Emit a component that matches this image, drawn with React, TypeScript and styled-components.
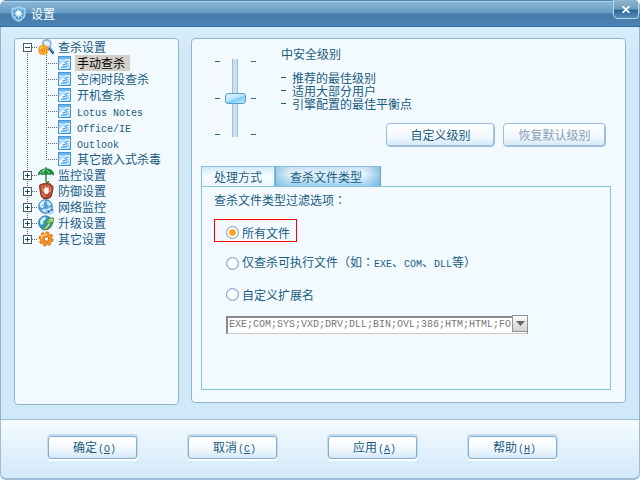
import React, { useState } from "react";
import styled, { createGlobalStyle, css } from "styled-components";

const ink = "#1a5c80";
const mono = '"Liberation Mono", monospace';

const GlobalStyle = createGlobalStyle`
  *, *::before, *::after { box-sizing: border-box; }
  body {
    margin: 0;
    background: #fff;
    color: ${ink};
    font: 12px/16px "Noto Sans CJK SC", sans-serif;
  }
  button, input, select { font: inherit; color: inherit; margin: 0; padding: 0; }
  ul, p { margin: 0; padding: 0; list-style: none; }
`;

const Window = styled.div`
  min-height: 100vh;
  display: flex;
  flex-direction: column;
  border-radius: 6px 6px 5px 5px;
  overflow: hidden;
  background: #d1e8f8;
`;

const TitleBar = styled.header`
  display: flex;
  align-items: flex-start;
  height: 27px;
  padding-left: 11px;
  border-bottom: 1px solid #2c6ea3;
  background: linear-gradient(#4d88b2 0 1px, #b1d3e8 1px 2px, #8ab7d6 2px, #649bc3 13px, #457ba9 14px, #4c83b2 26px);
`;

const Title = styled.h1`
  flex: 1;
  margin: 0;
  padding: 6px 0 0 5px;
  color: #fff;
  font-size: 12px;
  line-height: 16px;
  font-weight: 400;
`;

const ShieldBox = styled.span`
  display: flex;
  padding-top: 6px;
`;

const CloseButton = styled.button`
  display: grid;
  place-items: center;
  width: 26px;
  height: 19px;
  margin-right: 1px;
  border: 1px solid #b8d6e9;
  border-top: 0;
  border-radius: 0 0 4px 5px;
  background: linear-gradient(#8fb6d0, #6c9dbf 9px, #2d6693 10px, #5590b9);
`;

const Body = styled.main`
  flex: 1;
  display: grid;
  grid-template-columns: 165px minmax(0, 1fr);
  gap: 12px;
  padding: 11px 13px 14px 13px;
  border: solid #8fb3d0;
  border-width: 0 1px;
  background: linear-gradient(#d8edfb, #d1e8f8 30px);
`;

const Panel = styled.section`
  border: 1px solid #8fb4d0;
  border-radius: 4px;
  background: #f3faff;
`;

const SettingsPanel = styled(Panel)`
  margin-bottom: 2px;
  padding: 7px 14px 12px 9px;
  display: flex;
  flex-direction: column;
`;

const TreeList = styled.ul`
  position: relative;
  &::before {
    content: "";
    position: absolute;
    left: 12px;
    top: 8px;
    bottom: 8px;
    width: 1px;
    background: repeating-linear-gradient(#5c6873 0 1px, transparent 1px 2px);
  }
`;

const SubList = styled.ul`
  position: relative;
  padding-left: 31px;
  &::before {
    content: "";
    position: absolute;
    left: 31px;
    top: 0;
    bottom: 8px;
    width: 1px;
    background: repeating-linear-gradient(#5c6873 0 1px, transparent 1px 2px);
  }
`;

const TreeRow = styled.div`
  position: relative;
  display: flex;
  align-items: center;
  height: 16px;
  padding-left: 8px;
`;

const LeafRow = styled(TreeRow)`
  padding-left: 0;
`;

const Connector = styled.span<{ $long?: boolean }>`
  width: ${(p) => (p.$long ? 12 : 6)}px;
  height: 1px;
  background: repeating-linear-gradient(90deg, #5c6873 0 1px, transparent 1px 2px);
`;

const Toggle = styled.button`
  display: flex;
  width: 9px;
  height: 9px;
  border: 0;
  background: #fff;
`;

const TreeLabel = styled.button<{ $selected?: boolean; $leaf?: boolean }>`
  height: 16px;
  margin-left: ${(p) => (p.$leaf ? 4 : 2)}px;
  padding: 0 5px 0 2px;
  border: 0;
  background: none;
  line-height: 16px;
  white-space: nowrap;
  ${(p) => p.$selected && css`background: #d4d0c8; color: #000;`}
`;

const LevelArea = styled.div`
  display: flex;
  padding: 0 0 0 14px;
`;

const SliderGroup = styled.div`
  display: flex;
  gap: 5px;
  padding-top: 13px;
`;

const Ticks = styled.div`
  display: flex;
  flex-direction: column;
  justify-content: space-between;
  padding: 2px 0;
  span { width: 5px; height: 1px; background: #2b6788; }
`;

const LevelSlider = styled.input`
  appearance: none;
  writing-mode: vertical-lr;
  direction: rtl;
  width: 21px;
  height: 78px;
  background: linear-gradient(90deg, #9bc0df 0 1px, #c9dff2 1px 5px, #9bc0df 5px) 7px 0 / 6px 78px no-repeat;
  &::-webkit-slider-thumb {
    appearance: none;
    width: 21px;
    height: 11px;
    border: 1px solid #5b9cc8;
    border-radius: 3px;
    background: linear-gradient(160deg, #e3f6ff, #b2e2fc 50%, #7dccf5 55%, #b6f0ff);
  }
`;

const LevelText = styled.div`
  padding-left: 25px;
`;

const LevelPoints = styled.ul`
  padding-top: 9px;
  line-height: 13px;
  li { display: flex; gap: 6px; align-items: center; }
  li::before { content: ""; width: 5px; height: 1px; background: ${ink}; }
`;

const LevelActions = styled.div`
  display: flex;
  justify-content: flex-end;
  gap: 8px;
  padding: 0 5px 0 0;
  margin-top: -14px;
`;

const SoftButton = styled.button<{ $wide?: boolean }>`
  width: ${(p) => (p.$wide ? 109 : 103)}px;
  height: 24px;
  border: 1px solid #9bbbd8;
  border-radius: 4px;
  background: linear-gradient(#fff, #f3f9fe 55%, #d3e8f7);
  box-shadow: inset -1px -1px 0 0 #a5c3df;
  line-height: 16px;
  &:disabled { color: #8b9fb7; }
`;

const Tabs = styled.div`
  display: flex;
  padding-top: 19px;
`;

const Tab = styled.button<{ $active?: boolean }>`
  height: 20px;
  padding: 0 12px 0 12px;
  border: 1px solid #82bfe0;
  border-bottom: 0;
  line-height: 16px;
  background: linear-gradient(#d3eaf8, #f7fcff 9px, #edf7fd);
  ${(p) =>
    p.$active &&
    css`
      padding: 0 18px 0 14px;
      border-left: 1px solid #63a9d1;
      border-right-color: #63a9d1;
      background: linear-gradient(90deg, #6db1db88, transparent 15px calc(100% - 15px), #5ca7da99),
        linear-gradient(#c9e3f4, #e6f4fc 40%, #a0d0ef);
    `}
`;

const TabPanel = styled.div`
  flex: 1;
  display: flex;
  flex-direction: column;
  align-items: flex-start;
  padding: 5px 12px;
  border: 1px solid #83c5da;
`;

const RadioLine = styled.label<{ $marked?: boolean }>`
  display: flex;
  align-items: center;
  gap: 3px;
  height: 23px;
  margin-top: 8px;
  padding: 4px 6px 0 11px;
  border: 1px solid ${(p) => (p.$marked ? "#f00" : "transparent")};
  white-space: nowrap;
`;

const RadioGroup = styled.div`
  display: flex;
  flex-direction: column;
  align-items: flex-start;
  padding-top: 3px;
`;

const Radio = styled.input`
  appearance: none;
  width: 13px;
  height: 13px;
  border: 1px solid #7f9db9;
  border-radius: 50%;
  background: radial-gradient(circle, #fff 3px, #dce9f2 6px);
  &:checked {
    background: radial-gradient(circle, #f7a11c 0 2px, #ffb43c 3px, #fff 4px, #e4eef5 6px);
  }
`;

const Latin = styled.span`
  font-family: ${mono};
  font-size: 10px;
`;

const Colon = styled.span`
  font-family: "Noto Sans CJK TC", sans-serif;
`;

const Combo = styled.div`
  position: relative;
  width: 302px;
  max-width: calc(100% - 12px);
  height: 18px;
  margin: 10px 0 0 12px;
`;

const ComboSelect = styled.select`
  appearance: none;
  width: 100%;
  height: 18px;
  padding: 0 15px 0 1px;
  border: solid #8a8a8a;
  border-width: 2px 1px 1px 2px;
  border-bottom-color: #c8c8c8;
  border-radius: 0;
  background: #fff;
  color: #777;
  font-family: ${mono};
  font-size: 10px;
  line-height: 14px;
  opacity: 1;
`;

const ComboArrow = styled.span`
  position: absolute;
  top: 1px;
  right: 0;
  bottom: 0;
  width: 16px;
  display: grid;
  place-items: center;
  border: 1px solid #929292;
  background: linear-gradient(#f8f8f8, #d2d2d2);
  pointer-events: none;
`;

const Footer = styled.footer`
  display: flex;
  gap: 51px;
  height: 61px;
  padding: 17px 47px 0;
  border: 1px solid #9dbfdb;
  border-bottom: 2px solid #9dbfdb;
  border-radius: 0 0 6px 6px;
  background: linear-gradient(#f6fbff, #d1e8f9);
`;

const FooterButton = styled.button`
  display: flex;
  align-items: baseline;
  justify-content: center;
  gap: 1px;
  width: 89px;
  height: 23px;
  margin-top: -1px;
  padding: 2px 0 0 4px;
  border: 1px solid #86add0;
  border-radius: 3px;
  background: linear-gradient(#fff, #f5fafe 50%, #d4e8f7);
  box-shadow: 0 -1px 0 1px #c3def2, 0 1px 0 1px #fff;
  line-height: 16px;
`;

const Svg = ({ children, w = 16, h = 16 }: { children: React.ReactNode; w?: number; h?: number }) => (
  <svg width={w} height={h} viewBox={`0 0 ${w} ${h}`} aria-hidden="true">
    {children}
  </svg>
);

const ShieldIcon = () => (
  <Svg w={15} h={16}>
    <path d="M7.5.5 10 2l4 .3v6.2q0 4.2-6.5 7-6.5-2.8-6.5-7V2.300L5 2Z" fill="#8fc4e8" stroke="#b9def5" />
    <path d="M7.500 2.500 9.500 3.500l3 .3V8q0 3.200-5 5.800Q2.500 11.200 2.500 8V3.800l3-.3Z" fill="#4a94c8" />
    <circle cx="7.500" cy="7.500" r="3.200" fill="#d8f0fd" />
    <path d="M7.500 3v10M3 7.500h9M4 4l7 7M11 4l-7 7" stroke="#b4ddf5" strokeWidth="1" />
    <circle cx="7.500" cy="7" r="2" fill="#fff" />
  </Svg>
);

const gearPath = "M6.700 1h2.600l.4 2 1.300.6L12.700 2.500l1.800 1.800L13.400 6l.6 1.300 2 .4v2.600l-2 .4-.6 1.300 1.100 1.700-1.800 1.800-1.700-1.100-1.300.6-.4 2H6.700l-.4-2L5 14.400l-1.700 1.100-1.800-1.800L2.600 12 2 10.700l-2-.4V7.700l2-.4L2.600 6 1.500 4.300l1.800-1.800L5 3.600 6.300 3Z";

const ScanIcon = () => (
  <Svg>
    <path d="m11 8.500 4.500 6" stroke="#1f569b" strokeWidth="2.600" />
    <path d="m11.500 8.500 3.500 4.500" stroke="#6fa9dc" strokeWidth="1" />
    <circle cx="8.800" cy="4.800" r="4" fill="#e3effb" stroke="#98aedb" strokeWidth="1.700" />
    <g transform="translate(0 5) scale(.66)">
      <path d={gearPath} fill="#fbab22" stroke="#e08512" />
      <path d="M3 8q1-3 4-3.500" fill="none" stroke="#ffe08a" strokeWidth="1.500" />
      <circle cx="8" cy="9" r="2" fill="#ffe9a8" stroke="#cf6d12" strokeWidth="1.500" />
    </g>
  </Svg>
);

const UmbrellaIcon = () => (
  <Svg>
    <path d="M8 7v7q0 1.500 1.300 1.500T10.600 14" fill="none" stroke="#2b7a3b" strokeWidth="1.400" />
    <path d="M0 8Q1 2 8 1.800T16 8Q13.500 6 11.500 7.700 9.800 6.300 8 7.800 6 6.300 4.500 7.700 2.500 6 0 8Z" fill="#1f9040" stroke="#12692b" strokeWidth=".7" />
    <path d="M2 6Q3.500 3.300 7 2.600 5 4.500 4.600 6.500M8.500 2.600q2.200 1.600 2.700 4" fill="none" stroke="#7fdc8c" />
    <path d="M8 0v2" stroke="#12692b" />
  </Svg>
);

const GloveIcon = () => (
  <Svg>
    <path d="M1.500 3Q2 .3 4 1.500 5-.3 7 .8q2-1.300 3.500 0 2.300-.8 2.500 1.500 2.500 0 2 2.700l-1 5.500q-.5 4.500-4 5H6q-3-.8-3.500-5Z" fill="#bb4a30" stroke="#7f2b1c" />
    <path d="M4 2.500 4.500 8M7.300 2v3M10.300 2v3.500M13 4l-1 5M4 10q1 3.500 4 3.500" fill="none" stroke="#eb9a78" />
    <path d="M6 5.500q2.500-1.800 4.500 0l.3 3q-.8 2.500-2.500 2.500T6 8.500Z" fill="#fff" stroke="#ecd2c8" />
  </Svg>
);

const NetworkIcon = () => (
  <Svg>
    <circle cx="7.500" cy="7.500" r="6.900" fill="#4a9bd8" stroke="#4d8fc2" />
    <path d="M1.500 7Q2 2 6.500 1.200L7.500 3 5.500 5l1 2.200-2.500 2Z" fill="#e6f6fb" />
    <path d="M8.500 2q3.500.3 5 3.500L11 7.500 9 5.500ZM3.500 10.500l4-1 1.500 2-2 2.300Q4.500 13.500 3.500 10.500Z" fill="#bfe5ee" />
    <path d="M5 2.500 8 4.500M3 6l3 1" stroke="#3b86c6" strokeWidth=".7" />
    <circle cx="12" cy="12" r="3.500" fill="#dcecfa" stroke="#9cc6e8" strokeWidth=".8" />
    <circle cx="10.800" cy="12.500" r="1.600" fill="#2f7fc9" />
    <circle cx="13.600" cy="10.800" r="1.400" fill="#2f7fc9" />
  </Svg>
);

const UpdateIcon = () => (
  <Svg>
    <circle cx="7.500" cy="7.800" r="6.900" fill="#3d97cd" stroke="#2f7ca8" />
    <path d="M1.800 7Q3 2.500 7 1.800L8 4 5 6.500l.5 2L3 10Z" fill="#d3f0f0" />
    <path d="M3.500 13.500Q8 13 9.500 8.500L7.500 8 11 3.300l4.800-.3-1 5.500-1.600-1Q11.500 14.500 6 15Z" fill="#7cc257" stroke="#2f8236" strokeWidth=".8" />
    <path d="m11.300 4.800 3-.3-.6 2.500M11 9q-1.500 3.500-4 4.500" fill="none" stroke="#d2f0b0" />
  </Svg>
);

const GearIcon = () => (
  <Svg>
    <g transform="translate(1 0) rotate(12 7 8) scale(.88)">
      <path d={gearPath} fill="#f7931e" stroke="#dc6c12" />
      <path d="M2.500 9Q3 4.500 8 4" fill="none" stroke="#ffd27a" strokeWidth="1.800" />
      <circle cx="8.500" cy="9" r="2.600" fill="#f8fbff" stroke="#c25a10" />
    </g>
  </Svg>
);

const PageIcon = () => (
  <Svg w={13} h={14}>
    <rect x=".5" y=".5" width="12" height="13" fill="#b5dcf8" stroke="#4796d6" />
    <path d="M1 2h11" stroke="#6fb6ea" strokeWidth="2" />
    <path d="M1 13V9L9 3.500h3V6L4 13Z" fill="#e9f7ff" />
    <path d="M6.500 6.500 10.500 5M4.500 9 9.500 7.500M3 11.500l6-1.500" stroke="#3f92d6" strokeWidth="1.200" />
  </Svg>
);

type Group = { name: string; Icon: () => React.JSX.Element; children?: string[] };

const groups: Group[] = [
  {
    name: "查杀设置",
    Icon: ScanIcon,
    children: ["手动查杀", "空闲时段查杀", "开机查杀", "Lotus Notes", "Office/IE", "Outlook", "其它嵌入式杀毒"],
  },
  { name: "监控设置", Icon: UmbrellaIcon },
  { name: "防御设置", Icon: GloveIcon },
  { name: "网络监控", Icon: NetworkIcon },
  { name: "升级设置", Icon: UpdateIcon },
  { name: "其它设置", Icon: GearIcon },
];

const SettingsTree = () => {
  const [open, setOpen] = useState(true);
  const [selected, setSelected] = useState("手动查杀");
  return (
    <TreeList>
      {groups.map(({ name, Icon, children }) => {
        const expanded = Boolean(children) && open;
        return (
          <li key={name}>
            <TreeRow>
              <Toggle aria-label={name} aria-expanded={expanded} onClick={() => children && setOpen(!open)}>
                <Svg w={9} h={9}>
                  <rect x=".5" y=".5" width="8" height="8" fill="#fff" stroke="#4c5b68" />
                  <path d={expanded ? "M2 4.500h5" : "M2 4.500h5M4.500 2v5"} stroke="#17506f" />
                </Svg>
              </Toggle>
              <Connector />
              <Icon />
              <TreeLabel $selected={selected === name} onClick={() => setSelected(name)}>{name}</TreeLabel>
            </TreeRow>
            {children && expanded && (
              <SubList>
                {children.map((child) => (
                  <li key={child}>
                    <LeafRow>
                      <Connector $long />
                      <PageIcon />
                      <TreeLabel $leaf $selected={selected === child} onClick={() => setSelected(child)}>
                        {/^[A-Z]/.test(child) ? <Latin>{child}</Latin> : child}
                      </TreeLabel>
                    </LeafRow>
                  </li>
                ))}
              </SubList>
            )}
          </li>
        );
      })}
    </TreeList>
  );
};

const TickMarks = () => (
  <Ticks aria-hidden="true">
    <span />
    <span />
    <span />
  </Ticks>
);

const footerActions = [
  ["确定", "O"],
  ["取消", "C"],
  ["应用", "A"],
  ["帮助", "H"],
];

export default function App() {
  const [filter, setFilter] = useState("all");
  const radio = (value: string) => (
    <Radio type="radio" name="filter" value={value} checked={filter === value} onChange={() => setFilter(value)} />
  );
  return (
    <>
      <GlobalStyle />
      <Window>
        <TitleBar>
          <ShieldBox><ShieldIcon /></ShieldBox>
          <Title>设置</Title>
          <CloseButton aria-label="关闭">
            <Svg w={8} h={7}><path d="m.5 0 7 7M7.500 0l-7 7" stroke="#fff" strokeWidth="1.700" /></Svg>
          </CloseButton>
        </TitleBar>
        <Body>
          <Panel as="nav"><SettingsTree /></Panel>
          <SettingsPanel>
            <LevelArea>
              <SliderGroup>
                <TickMarks />
                <LevelSlider type="range" min={0} max={2} defaultValue={1} aria-label="安全级别" />
                <TickMarks />
              </SliderGroup>
              <LevelText>
                <p>中安全级别</p>
                <LevelPoints>
                  <li>推荐的最佳级别</li>
                  <li>适用大部分用户</li>
                  <li>引擎配置的最佳平衡点</li>
                </LevelPoints>
              </LevelText>
            </LevelArea>
            <LevelActions>
              <SoftButton $wide>自定义级别</SoftButton>
              <SoftButton disabled>恢复默认级别</SoftButton>
            </LevelActions>
            <Tabs role="tablist">
              <Tab role="tab" aria-selected={false}>处理方式</Tab>
              <Tab role="tab" aria-selected $active>查杀文件类型</Tab>
            </Tabs>
            <TabPanel role="tabpanel">
              <p>查杀文件类型过滤选项<Colon>：</Colon></p>
              <RadioGroup role="radiogroup" aria-label="查杀文件类型过滤选项">
                <RadioLine $marked>{radio("all")}所有文件</RadioLine>
                <RadioLine>
                  {radio("exe")}
                  <span>
                    仅查杀可执行文件（如<Colon>：</Colon><Latin>EXE</Latin>、<Latin>COM</Latin>、<Latin>DLL</Latin>等）
                  </span>
                </RadioLine>
                <RadioLine>{radio("custom")}自定义扩展名</RadioLine>
              </RadioGroup>
              <Combo>
                <ComboSelect disabled aria-label="自定义扩展名">
                  <option>EXE;COM;SYS;VXD;DRV;DLL;BIN;OVL;386;HTM;HTML;FO</option>
                </ComboSelect>
                <ComboArrow>
                  <Svg w={9} h={5}><path d="M0 0h9L4.500 5Z" fill="#666" /></Svg>
                </ComboArrow>
              </Combo>
            </TabPanel>
          </SettingsPanel>
        </Body>
        <Footer>
          {footerActions.map(([label, key]) => (
            <FooterButton key={key}>
              <span>{label}</span>
              <Latin>(<u>{key}</u>)</Latin>
            </FooterButton>
          ))}
        </Footer>
      </Window>
    </>
  );
}
